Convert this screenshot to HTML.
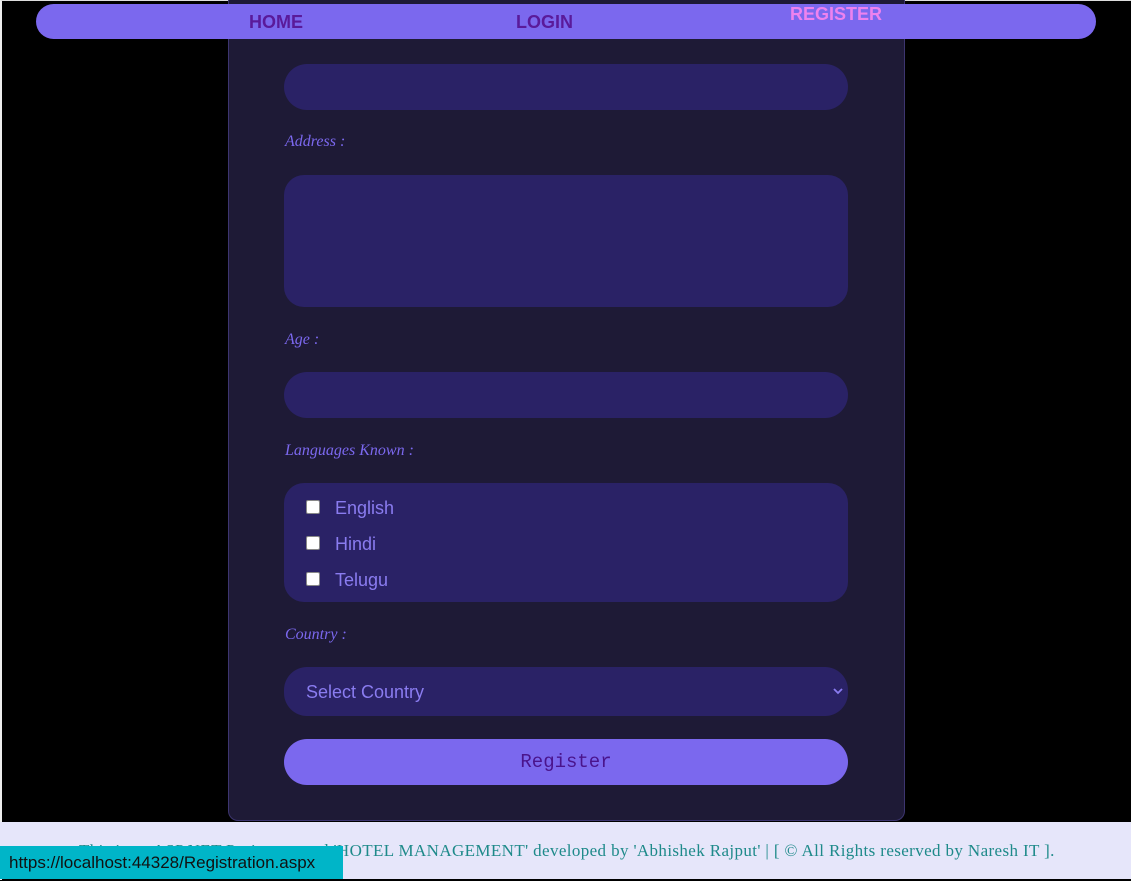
<!DOCTYPE html>
<html><head><style>
html,body{margin:0;padding:0;}
body{width:1131px;height:881px;background:#000;position:relative;overflow:hidden;font-family:"Liberation Sans",sans-serif;}
.frame{position:absolute;left:0;top:0;width:1129px;height:879px;border-top:1px solid #ddd;border-left:2px solid #eee;border-right:1px solid #ccc;}
.card{position:absolute;left:228px;top:0;width:677px;height:821px;background:#1e1a36;border:1px solid #3d3570;border-top:none;border-radius:0 0 10px 10px;box-sizing:border-box;}
.nav{position:absolute;left:36px;top:4px;width:1060px;height:35px;background:#7b68ee;border-radius:18px;}
.nav span{position:absolute;font-weight:bold;font-size:18px;color:#5a1a9a;}
.inp{position:absolute;left:284px;width:564px;background:#2a2266;border-radius:23px;}
.lbl{position:absolute;left:285px;font-family:"Liberation Serif",serif;font-style:italic;font-size:16px;color:#7b68ee;}
.cb{position:absolute;left:306px;width:12px;height:12px;background:#fff;border:1px solid #888;border-radius:2px;}
.ct{position:absolute;left:335px;font-size:18px;color:#8a7cf0;}
.footer{position:absolute;left:0;top:822px;width:1131px;height:57px;background:#e6e6fa;}
.footer p{position:absolute;left:79px;top:19px;margin:0;font-family:"Liberation Serif",serif;font-size:17px;letter-spacing:0.38px;color:#1e8a8a;white-space:nowrap;}
.status{position:absolute;left:0;top:846px;width:343px;height:33px;background:#00b5c8;color:#111;font-size:17px;line-height:33px;padding-left:9px;box-sizing:border-box;}
</style></head><body>
<div class="frame"></div>
<div class="card"></div>
<div class="nav">
<span style="left:213px;top:8px">HOME</span>
<span style="left:480px;top:8px">LOGIN</span>
<span style="left:754px;top:0px;color:#ee82ee">REGISTER</span>
</div>
<div class="inp" style="top:64px;height:46px"></div>
<div class="lbl" style="top:133px">Address :</div>
<div class="inp" style="top:175px;height:132px;border-radius:20px"></div>
<div class="lbl" style="top:331px">Age :</div>
<div class="inp" style="top:372px;height:46px"></div>
<div class="lbl" style="top:442px">Languages Known :</div>
<div class="inp" style="top:483px;height:119px;border-radius:20px"></div>
<div class="cb" style="top:500px"></div><div class="ct" style="top:498px">English</div>
<div class="cb" style="top:536px"></div><div class="ct" style="top:534px">Hindi</div>
<div class="cb" style="top:572px"></div><div class="ct" style="top:570px">Telugu</div>
<div class="lbl" style="top:626px">Country :</div>
<div class="inp" style="top:667px;height:49px"><span style="position:absolute;left:22px;top:15px;font-size:18px;color:#8a7cf0">Select Country</span><svg style="position:absolute;right:5px;top:20px" width="10" height="8" viewBox="0 0 10 8"><path d="M1 2 L5 6 L9 2" stroke="#8a7cf0" stroke-width="1.8" fill="none"/></svg></div>
<div class="inp" style="top:739px;height:46px;background:#7b68ee;text-align:center;line-height:46px;font-family:'Liberation Mono',monospace;font-size:19px;color:#4a148c;">Register</div>
<div class="footer"><p>This is an ASP.NET Project named 'HOTEL MANAGEMENT' developed by 'Abhishek Rajput' | [ © All Rights reserved by Naresh IT ].</p></div>
<div class="status">https://localhost:44328/Registration.aspx</div>
</body></html>
